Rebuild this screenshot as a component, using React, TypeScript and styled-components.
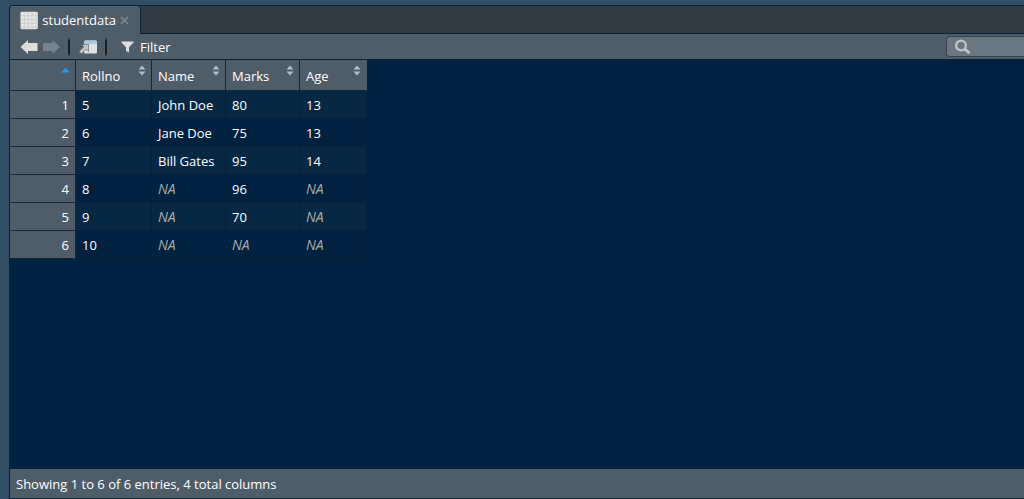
import React from 'react';
import styled, { createGlobalStyle } from 'styled-components';

const GlobalStyle = createGlobalStyle`
  * { box-sizing: border-box; }
  body {
    margin: 0;
    background: #324d66;
    color: #fff;
    font: 13px/18px "Open Sans", "Segoe UI", sans-serif;
  }
  button, input { font: inherit; color: inherit; }
`;

const Page = styled.div`
  display: flex;
  min-height: 100vh;
  padding: 5px 0 0 9px;
`;

const Pane = styled.main`
  display: flex;
  flex: 1;
  flex-direction: column;
  min-width: 0;
  border: solid #0c2138;
  border-width: 1px 0 1px 1px;
  border-top-left-radius: 4px;
  background: #00213f;
  overflow: hidden;
`;

const TabStrip = styled.div`
  display: flex;
  height: 28px;
  border-bottom: 1px solid #0c2138;
  background: #303a43;
`;

const Tab = styled.div`
  display: flex;
  align-items: center;
  width: 131px;
  height: 28px;
  padding: 0 11px 0 10px;
  gap: 4px;
  border-right: 1px solid #0c2138;
  border-top-right-radius: 4px;
  background: #4f5d68;
  box-shadow: inset 0 1px #5b6975;
`;

const TabLabel = styled.span`
  flex: 1;
`;

const PlainButton = styled.button`
  display: flex;
  align-items: center;
  padding: 0;
  border: 0;
  background: none;
`;

const Toolbar = styled.div`
  display: flex;
  align-items: center;
  height: 26px;
  padding-left: 10px;
  border-bottom: 1px solid #0c2138;
  background: #4f5d68;
`;

const ToolGroup = styled.div`
  display: flex;
  align-items: center;
  gap: 4px;
`;

const Divider = styled.span`
  width: 2px;
  height: 20px;
  margin: 0 9px 0 8px;
  background: linear-gradient(#4f5d68, #171d22 20%, #171d22 80%, #4f5d68);
`;

const FilterButton = styled(PlainButton)`
  gap: 6px;
  margin-left: 5px;
`;

const Search = styled.label`
  display: flex;
  align-items: center;
  width: 78px;
  height: 21px;
  margin-left: auto;
  padding-left: 7px;
  border: solid #36434e;
  border-width: 1px 0 1px 1px;
  border-radius: 4px 0 0 4px;
  background: #6b7780;
  svg { flex: none; }
`;

const SearchInput = styled.input`
  width: 100%;
  min-width: 0;
  padding: 0 4px;
  border: 0;
  outline: 0;
  background: none;
`;

const TableArea = styled.div`
  flex: 1;
  overflow: auto;
`;

const Table = styled.table`
  width: 357px;
  table-layout: fixed;
  border-collapse: separate;
  border-spacing: 0;
`;

const Column = styled.col<{ $width: number }>`
  width: ${(p) => p.$width}px;
`;

const HeaderCell = styled.th`
  height: 31px;
  padding: 0;
  border: solid #13263a;
  border-width: 0 1px 1px 0;
  background: #4f5d68;
  font-weight: 400;
  &:last-child { border-right-color: #4f5d68; }
`;

const SortButton = styled(PlainButton)<{ $end?: boolean }>`
  width: 100%;
  height: 30px;
  padding: 2px 5px 0 6px;
  justify-content: ${(p) => (p.$end ? 'flex-end' : 'space-between')};
  svg { margin-bottom: 12px; }
`;

const Row = styled.tr<{ $shaded: boolean }>`
  background: ${(p) => (p.$shaded ? '#062844' : '#00213f')};
`;

const RowNumber = styled.th`
  height: 28px;
  padding: 1px 6px 0;
  border: solid #13263a;
  border-width: 0 1px 1px 0;
  background: #4f5d68;
  font-weight: 400;
  text-align: right;
`;

const Cell = styled.td<{ $missing: boolean }>`
  height: 28px;
  padding: 1px 6px 0;
  border: solid #05203a;
  border-width: 0 1px 1px 0;
  color: ${(p) => (p.$missing ? '#a9abad' : '#fff')};
  font-size: ${(p) => (p.$missing ? 14 : 13)}px;
  font-style: ${(p) => (p.$missing ? 'italic' : 'normal')};
`;

const Footer = styled.footer`
  display: flex;
  align-items: center;
  height: 29px;
  padding: 0 6px;
  background: #4f5d68;
`;

const GridIcon = () => (
  <svg width="19" height="19" viewBox="0 0 19 19" aria-hidden="true">
    <rect x="0.5" y="0.5" width="18" height="18" rx="1.5" fill="#e5e5e5" />
    <path d="M1 4.5h17M1 8.5h17M1 12.5h17M1 16.5h17M4.5 1v17M8.5 1v17M12.5 1v17M16.5 1v17" stroke="#c6c8ca" strokeWidth="0.8" />
  </svg>
);

const CloseIcon = () => (
  <svg width="9" height="9" viewBox="0 0 9 9" aria-hidden="true">
    <path d="M1 1l7 7M8 1l-7 7" stroke="#7f8992" strokeWidth="1.6" />
  </svg>
);

const ArrowIcon = ({ forward = false }: { forward?: boolean }) => (
  <svg width="18" height="14" viewBox="0 0 18 14" aria-hidden="true">
    <path
      d={forward ? 'M18 7L10.500 0v3H1v8h9.500v3z' : 'M0.500 7L8 0v3h9.500v8H8v3z'}
      fill={forward ? '#77838c' : '#dcdddd'}
    />
  </svg>
);

const PopOutIcon = () => (
  <svg width="18" height="14" viewBox="0 0 18 14" aria-hidden="true">
    <rect x="5" y="0.5" width="13" height="13" rx="1.5" fill="#dfe2e3" />
    <path d="M5 4V2q0-1.500 1.500-1.500h10Q18 0.500 18 2v2z" fill="#acc9dc" />
    <path d="M2.500 4.500H9.500v7L7.200 9.200 2.500 13.700 0 11.500 4.800 6.800z" fill="#c4c7c9" stroke="#5b6771" strokeWidth="0.7" />
  </svg>
);

const FunnelIcon = () => (
  <svg width="13" height="12" viewBox="0 0 13 12" aria-hidden="true">
    <path d="M0.500 0.500h12v1L8 6.300V11.500L5 10V6.300L0.500 1.500z" fill="#dcdedf" />
  </svg>
);

const SearchIcon = () => (
  <svg width="17" height="16" viewBox="0 0 17 16" aria-hidden="true">
    <circle cx="7" cy="6.500" r="4.900" fill="none" stroke="#bdc2c6" strokeWidth="2.400" />
    <path d="M10.800 10.200l4.700 4" stroke="#bdc2c6" strokeWidth="3" />
  </svg>
);

const SortIcon = () => (
  <svg width="8" height="11" viewBox="0 0 8 11" aria-hidden="true">
    <path d="M4 0.500L7.500 4.500h-7zM0.500 6.500h7L4 10.500z" fill="#b8bdc1" />
  </svg>
);

const AscendingIcon = () => (
  <svg width="9" height="11" viewBox="0 0 9 11" aria-hidden="true">
    <path d="M4.500 2.500L9 7.500H0z" fill="#2196f3" />
  </svg>
);

const columns = ['Rollno', 'Name', 'Marks', 'Age'];
const widths = [66, 76, 74, 74, 67];
const records = [
  ['5', 'John Doe', '80', '13'],
  ['6', 'Jane Doe', '75', '13'],
  ['7', 'Bill Gates', '95', '14'],
  ['8', 'NA', '96', 'NA'],
  ['9', 'NA', '70', 'NA'],
  ['10', 'NA', 'NA', 'NA'],
];

export default function App() {
  return (
    <>
      <GlobalStyle />
      <Page>
        <Pane>
          <TabStrip>
            <Tab>
              <GridIcon />
              <TabLabel>studentdata</TabLabel>
              <PlainButton aria-label="Close tab"><CloseIcon /></PlainButton>
            </Tab>
          </TabStrip>
          <Toolbar>
            <ToolGroup>
              <PlainButton aria-label="Back"><ArrowIcon /></PlainButton>
              <PlainButton aria-label="Forward"><ArrowIcon forward /></PlainButton>
            </ToolGroup>
            <Divider />
            <PlainButton aria-label="Show in new window"><PopOutIcon /></PlainButton>
            <Divider />
            <FilterButton><FunnelIcon />Filter</FilterButton>
            <Search>
              <SearchIcon />
              <SearchInput type="text" aria-label="Search" />
            </Search>
          </Toolbar>
          <TableArea>
            <Table>
              <colgroup>
                {widths.map((width, i) => <Column key={i} $width={width} />)}
              </colgroup>
              <thead>
                <tr>
                  <HeaderCell scope="col">
                    <SortButton $end aria-label="Sort by row number"><AscendingIcon /></SortButton>
                  </HeaderCell>
                  {columns.map((name) => (
                    <HeaderCell key={name} scope="col">
                      <SortButton>{name}<SortIcon /></SortButton>
                    </HeaderCell>
                  ))}
                </tr>
              </thead>
              <tbody>
                {records.map((record, r) => (
                  <Row key={r} $shaded={r % 2 === 0}>
                    <RowNumber scope="row">{r + 1}</RowNumber>
                    {record.map((value, c) => (
                      <Cell key={c} $missing={value === 'NA'}>{value}</Cell>
                    ))}
                  </Row>
                ))}
              </tbody>
            </Table>
          </TableArea>
          <Footer>Showing 1 to 6 of 6 entries, 4 total columns</Footer>
        </Pane>
      </Page>
    </>
  );
}
